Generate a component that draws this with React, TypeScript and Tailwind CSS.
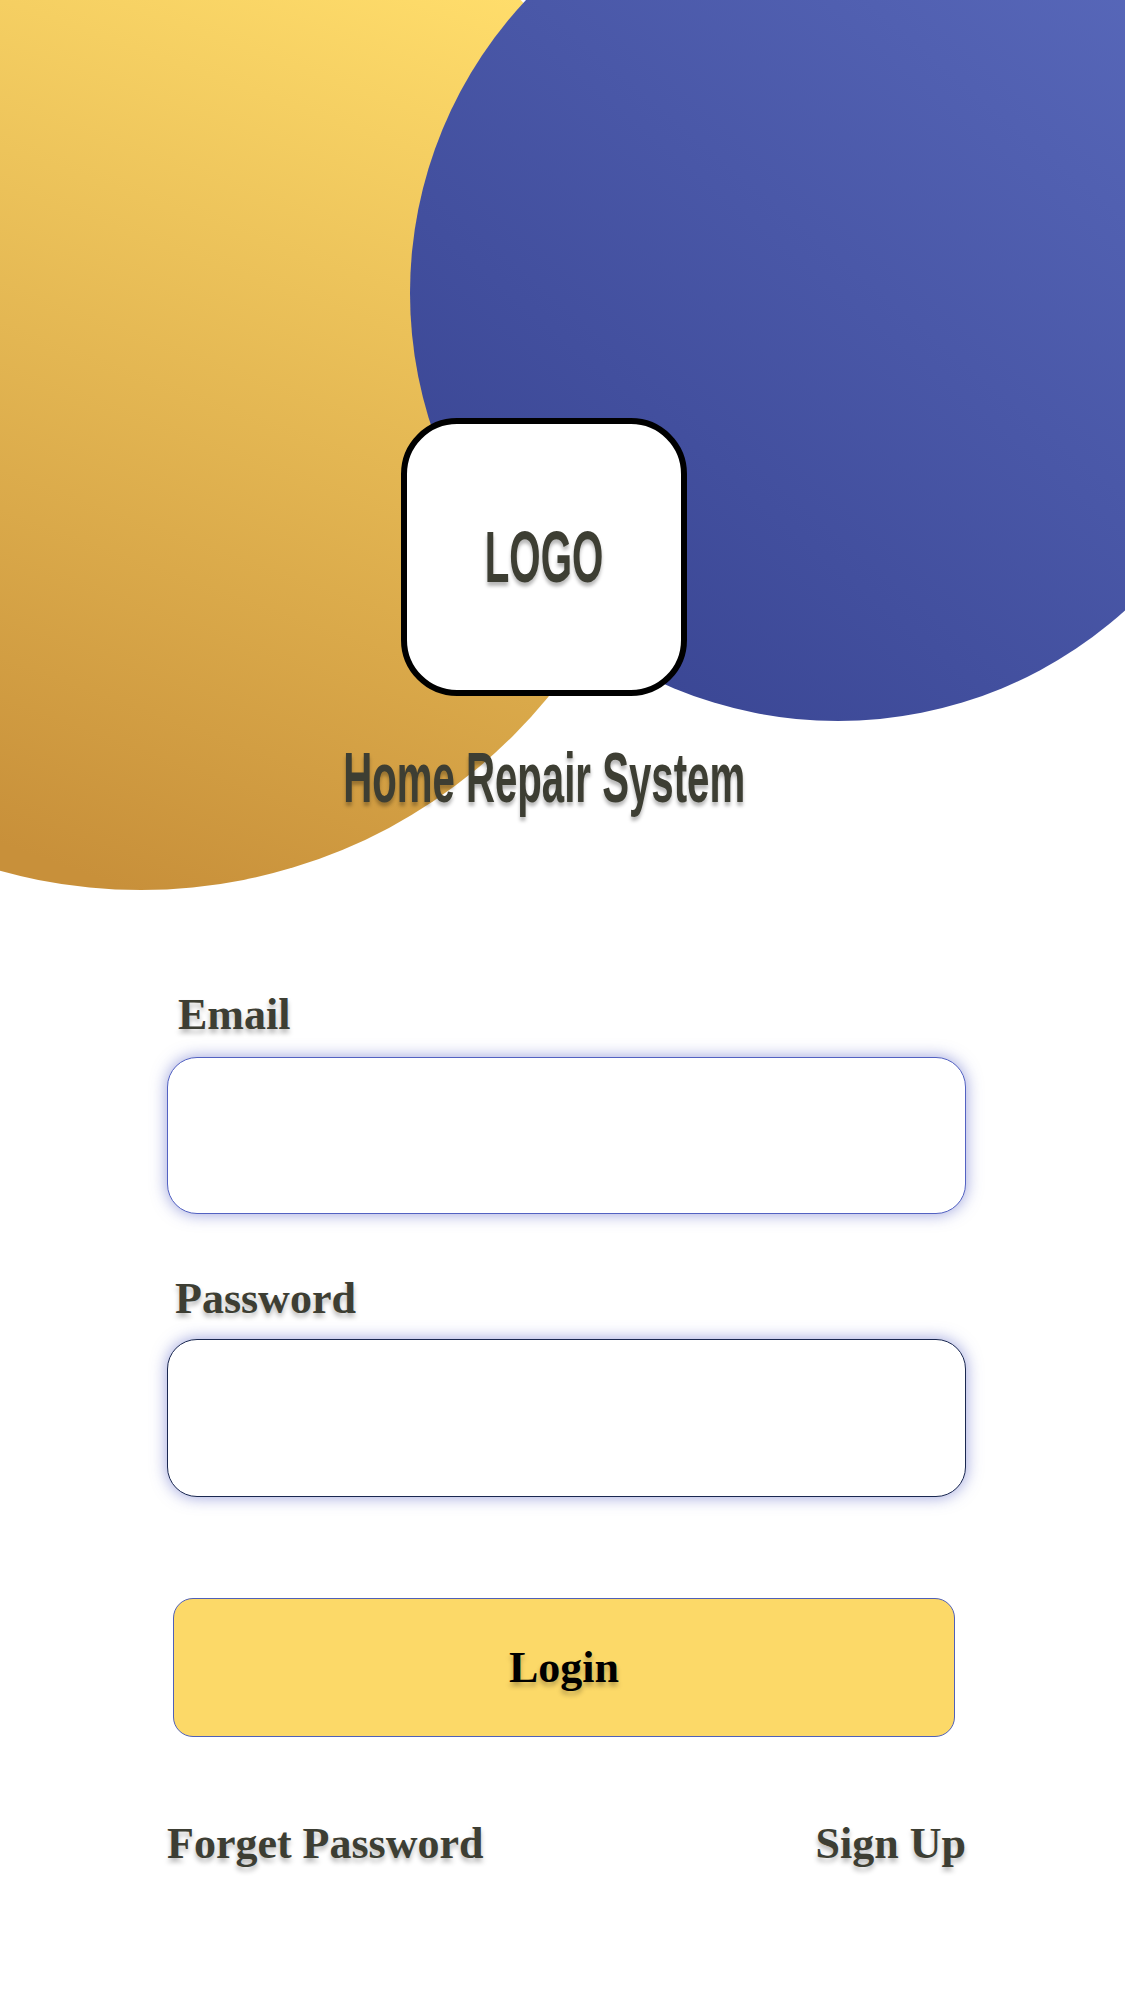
import React from "react";

export default function App() {
  const serif = "font-['Liberation_Serif','Times_New_Roman',serif]";
  const shadow = "[text-shadow:0_4px_5px_rgba(0,0,0,0.28)]";
  return (
    <div className="relative w-[1125px] min-h-[2016px] overflow-hidden bg-white">
      {/* decorative circles */}
      <div className="absolute left-[-385px] top-[-162px] w-[1052px] h-[1052px] rounded-full bg-[linear-gradient(200deg,#FFDD6B_15%,#C8903A_87%)]" />
      <div className="absolute left-[410px] top-[-135px] w-[856px] h-[856px] rounded-full bg-[linear-gradient(220deg,#5868BA_12%,#3B4795_85%)]" />

      <div className="relative flex flex-col pt-[418px]">
        {/* header */}
        <div className="ml-[401px] w-[286px] flex flex-col items-center">
          <div className="w-[286px] h-[278px] rounded-[56px] border-[6px] border-black bg-white flex items-center justify-center">
            <span
              className={`font-['Liberation_Sans',Arial,sans-serif] font-bold text-[72px] leading-none text-[#3d3e33] scale-x-[0.56] ${shadow}`}
            >
              LOGO
            </span>
          </div>
          <h1
            className={`mt-[47px] whitespace-nowrap font-['Liberation_Sans',Arial,sans-serif] font-bold text-[70px] leading-none text-[#3d3e33] scale-x-[0.574] ${shadow}`}
          >
            Home Repair System
          </h1>
        </div>

        {/* form */}
        <div className="ml-[167px] w-[799px] mt-[180px] flex flex-col">
          <label className={`${serif} ml-[11px] font-bold text-[44px] leading-none text-[#3d3e33] ${shadow}`}>
            Email
          </label>
          <input
            type="email"
            className="mt-[20px] h-[157px] w-full rounded-[30px] border border-[#5362C2] bg-white shadow-[0_0_16px_rgba(70,80,190,0.55)] outline-none px-6 text-[40px]"
          />
          <label className={`${serif} mt-[63px] ml-[8px] font-bold text-[44px] leading-none text-[#3d3e33] ${shadow}`}>
            Password
          </label>
          <input
            type="password"
            className="mt-[18px] h-[158px] w-full rounded-[30px] border border-[#1a2850] bg-white shadow-[0_0_16px_rgba(70,80,190,0.55)] outline-none px-6 text-[40px]"
          />
          <button
            className={`mt-[101px] ml-[6px] w-[782px] h-[139px] rounded-[20px] border border-[#5060B8] bg-[#FCD968] flex items-center justify-center ${serif} font-bold text-[44px] leading-none text-black ${shadow}`}
          >
            Login
          </button>
          <div className={`mt-[85px] flex justify-between ${serif} font-bold text-[44px] leading-none text-[#3d3e33] ${shadow}`}>
            <span>Forget Password</span>
            <span>Sign Up</span>
          </div>
        </div>
      </div>
    </div>
  );
}
